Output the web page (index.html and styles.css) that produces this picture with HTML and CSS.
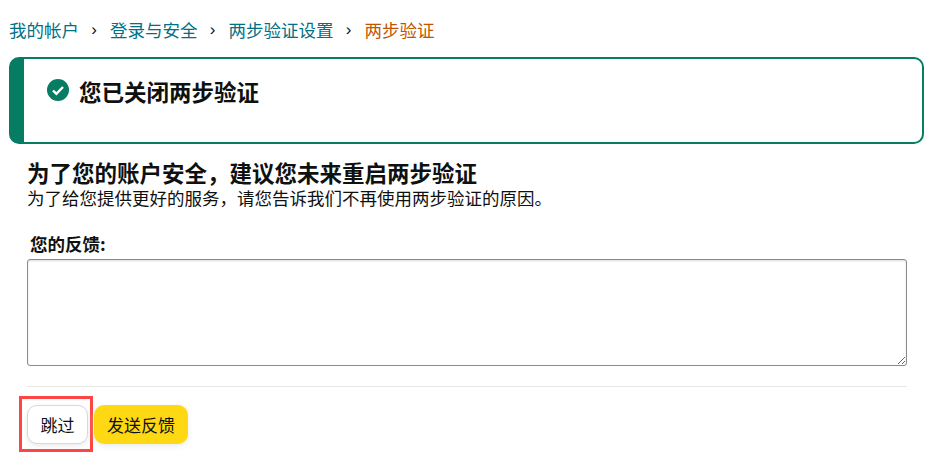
FILE: index.html
```html
<!DOCTYPE html>
<html lang="zh-CN">
<head>
<meta charset="utf-8">
<title>两步验证</title>
<link rel="stylesheet" href="styles.css">
</head>
<body>
<nav class="crumbs">
  <a class="crumb-link">我的帐户</a><span class="sep">›</span>
  <a class="crumb-link">登录与安全</a><span class="sep">›</span>
  <a class="crumb-link">两步验证设置</a><span class="sep">›</span>
  <span class="crumb-current">两步验证</span>
</nav>
<section class="alert">
  <svg class="alert-icon" viewBox="0 0 22 22" width="22" height="22" aria-hidden="true">
    <circle cx="11" cy="11" r="11" fill="#067d62"/>
    <path d="M6 11.5l3.4 3.4L16 8" fill="none" stroke="#fff" stroke-width="2.4"/>
  </svg>
  <h1 class="alert-title">您已关闭两步验证</h1>
</section>
<main class="content">
  <h2 class="title">为了您的账户安全，建议您未来重启两步验证</h2>
  <p class="subtitle">为了给您提供更好的服务，请您告诉我们不再使用两步验证的原因。</p>
  <label class="label" for="fb">您的反馈:</label>
  <textarea class="feedback" id="fb"></textarea>
  <hr class="rule">
  <div class="actions">
    <div class="highlight"><button class="btn btn-skip">跳过</button></div>
    <button class="btn btn-send">发送反馈</button>
  </div>
</main>
</body>
</html>
```
FILE: styles.css
```css
* { box-sizing: border-box; }
html, body { margin: 0; padding: 0; background: #fff; }
body {
  font-family: "Noto Sans CJK SC", "Liberation Sans", sans-serif;
  font-size: 17.5px;
  color: #0f1111;
  padding: 17px 12px 0 9px;
  overflow: hidden;
}
.crumbs {
  display: flex;
  align-items: center;
  height: 26px;
  line-height: 26px;
  white-space: nowrap;
}
.crumb-link { color: #007185; }
.crumb-current { color: #c45500; }
.sep {
  width: 46px;
  margin: 0 -7px 0 -8px;
  text-align: center;
  color: #111;
  font-family: "Liberation Sans", sans-serif;
  font-size: 17px;
}
.alert {
  display: flex;
  align-items: flex-start;
  gap: 10px;
  height: 87px;
  margin-top: 14px;
  padding: 20px 0 0 23px;
  border: 2px solid #067d62;
  border-left-width: 15px;
  border-radius: 10px;
}
.alert-icon { flex: none; }
.alert-title {
  margin: -2px 0 0;
  font-size: 22.5px;
  font-weight: 700;
  line-height: 28px;
}
.content { padding: 0 17px 0 18px; }
.title {
  margin: 15px 0 0;
  font-size: 22.5px;
  font-weight: 700;
  line-height: 26px;
}
.subtitle { margin: 3px 0 0; line-height: 20px; }
.label {
  display: block;
  margin: 25px 0 0 3px;
  font-weight: 700;
  line-height: 22px;
}
.feedback {
  display: block;
  width: 100%;
  height: 107px;
  margin-top: 4px;
  border: 1px solid #888c8c;
  border-radius: 3px;
  box-shadow: inset 0 1px 2px rgba(15, 17, 17, .15);
  outline: none;
}
.rule {
  height: 1px;
  margin: 20px 0 0;
  border: 0;
  background: #e7e7e7;
}
.actions {
  display: flex;
  align-items: flex-start;
  gap: 1px;
  margin: 9px 0 0 -8px;
}
.highlight {
  padding: 6px 2px 5px 5px;
  border: 3px solid #f44;
}
.btn {
  display: block;
  height: 39px;
  margin-top: 9px;
  border-radius: 10px;
  font: inherit;
  font-size: 17px;
  color: #0f1111;
  padding: 0;
}
.btn-skip {
  width: 61px;
  margin-top: 0;
  background: #fff;
  border: 1px solid #d5d9d9;
  box-shadow: 0 2px 5px rgba(213, 217, 217, .5);
}
.btn-send {
  width: 94px;
  background: #ffd814;
  border: 0;
  box-shadow: 0 2px 5px rgba(213, 217, 217, .5);
}
```
